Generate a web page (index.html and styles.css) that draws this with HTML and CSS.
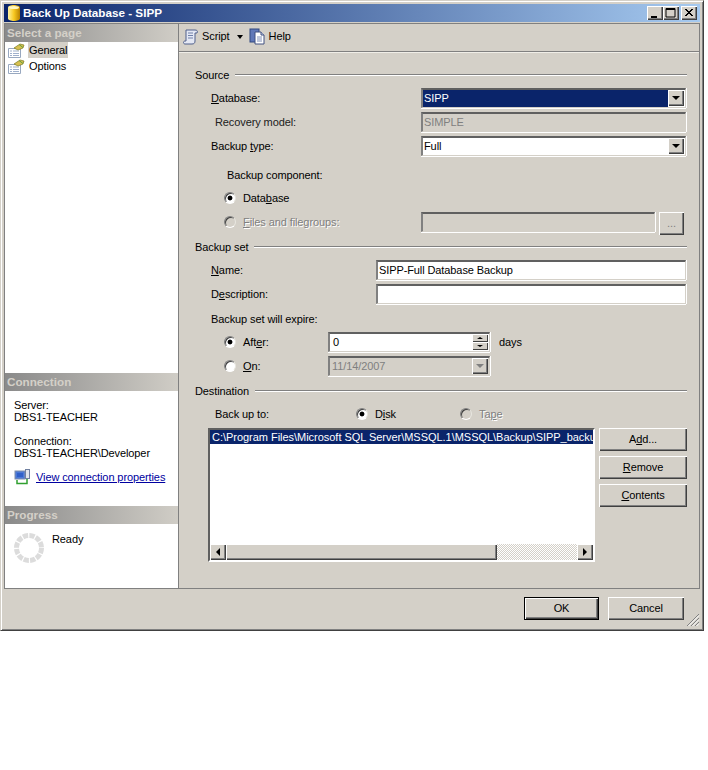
FILE: index.html
```html
<!DOCTYPE html>
<html lang="en">
<head>
<meta charset="utf-8">
<title>Back Up Database - SIPP</title>
<link rel="stylesheet" href="styles.css">
</head>
<body>
<div class="window">
  <div class="titlebar">
    <svg class="title-icon" width="12" height="16" viewBox="0 0 12 16"><defs><linearGradient id="cyl" x1="0" x2="1" y1="0" y2="0"><stop offset="0" stop-color="#fff2a0"/><stop offset=".5" stop-color="#f8c820"/><stop offset="1" stop-color="#b88000"/></linearGradient></defs><path d="M0 2.5C0 1 3 0 6 0s6 1 6 2.5v11c0 1.500-3 2.500-6 2.500s-6-1-6-2.500z" fill="url(#cyl)"/><ellipse cx="6" cy="2.500" rx="5" ry="1.500" fill="#fff6c0"/></svg>
    <span class="title-text">Back Up Database - SIPP</span>
    <div class="caption-btns">
      <span class="cap-btn"><svg width="15" height="14" viewBox="0 0 15 14"><rect x="4" y="10" width="6" height="2" fill="#000"/></svg></span>
      <span class="cap-btn"><svg width="15" height="14" viewBox="0 0 15 14"><path d="M3 2.500h9v8.500H3z M3 3.500h9" fill="none" stroke="#000"/></svg></span>
      <span class="cap-btn cap-close"><svg width="15" height="14" viewBox="0 0 15 14"><path d="M4 3l7 7M5 3l7 7M11 3l-7 7M12 3l-7 7" stroke="#000" fill="none"/></svg></span>
    </div>
  </div>

  <div class="panel">
    <aside class="sidebar">
      <section class="side-pages">
        <h2 class="side-head">Select a page</h2>
        <div class="nav-item">
          <svg class="nav-icon" width="17" height="15" viewBox="0 0 17 15"><path d="M.5 5.500h12v9H.5z" fill="#fff" stroke="#98a8c0"/><path d="M2 8h2M5 8h6M2 10.500h2M5 10.500h6M2 12.500h2M5 12.500h6" stroke="#9fb0cc"/><path d="M6 5l6-4 4 1-1 3-5 2z" fill="#d8c050" stroke="#7a7a20" stroke-width=".7"/><path d="M11 1.500l4 3" stroke="#60a040"/></svg>
          <span class="nav-label nav-active">General</span>
        </div>
        <div class="nav-item">
          <svg class="nav-icon" width="17" height="15" viewBox="0 0 17 15"><path d="M.5 5.500h12v9H.5z" fill="#fff" stroke="#98a8c0"/><path d="M2 8h2M5 8h6M2 10.500h2M5 10.500h6M2 12.500h2M5 12.500h6" stroke="#9fb0cc"/><path d="M6 5l6-4 4 1-1 3-5 2z" fill="#d8c050" stroke="#7a7a20" stroke-width=".7"/><path d="M11 1.500l4 3" stroke="#60a040"/></svg>
          <span class="nav-label">Options</span>
        </div>
      </section>
      <section class="side-conn">
        <h2 class="side-head">Connection</h2>
        <div class="conn-body">
          <p class="conn-block">Server:<br>DBS1-TEACHER</p>
          <p class="conn-block">Connection:<br>DBS1-TEACHER\Developer</p>
          <div class="conn-link">
            <svg width="17" height="16" viewBox="0 0 17 16"><rect x="1" y="2" width="10" height="8" fill="#4a78d8" stroke="#8090a8"/><rect x="3" y="4" width="6" height="4" fill="#3060c8"/><rect x="11.500" y=".5" width="4" height="9" fill="#e0e4ec" stroke="#7080a0"/><path d="M3 11v3.500h10V10" fill="none" stroke="#30a030" stroke-width="1.500"/></svg>
            <a href="#" class="link">View connection properties</a>
          </div>
        </div>
      </section>
      <section class="side-progress">
        <h2 class="side-head">Progress</h2>
        <div class="progress-body">
          <svg width="32" height="32" viewBox="0 0 32 32"><circle cx="16" cy="16" r="12.500" fill="none" stroke="#dcdcdc" stroke-width="5" stroke-dasharray="5.300 1.245"/></svg>
          <span class="ready">Ready</span>
        </div>
      </section>
    </aside>

    <main class="main">
      <div class="toolbar">
        <svg class="tool-icon" width="16" height="16" viewBox="0 0 16 16"><path d="M3 1h9c2 0 3 1 2 3h-2v8c0 2-1 3-3 3H2c-2 0-2-3 0-3h1V4z" fill="#e4e8f4" stroke="#50608c"/><path d="M5 4h5M5 6.500h5M5 9h5" stroke="#7080a8"/></svg>
        <span class="tool-text tool-script">Script</span>
        <span class="tool-caret"></span>
        <svg class="tool-icon" width="17" height="17" viewBox="0 0 17 17"><rect x="1" y="1" width="9" height="13" fill="#6078b8" stroke="#304880"/><path d="M6 4h6l3 3v9H6z" fill="#fff" stroke="#405080"/><path d="M12 4v3h3" fill="#c8d0e8" stroke="#405080"/><path d="M8 9h5M8 11h5M8 13h5" stroke="#8090b8"/></svg>
        <span class="tool-text">Help</span>
      </div>

      <div class="form">
        <div class="section"><span>Source</span><i class="rule"></i></div>
        <div class="row">
          <label class="lbl w226 in16"><u>D</u>atabase:</label>
          <div class="combo grow"><span class="combo-val selected">SIPP</span><span class="drop"><b class="arrow"></b></span></div>
        </div>
        <div class="row">
          <label class="lbl w226 in20 ro">Recovery model:</label>
          <div class="field grow field-off">SIMPLE</div>
        </div>
        <div class="row">
          <label class="lbl w226 in16">Backup <u>t</u>ype:</label>
          <div class="combo grow"><span class="combo-val">Full</span><span class="drop"><b class="arrow"></b></span></div>
        </div>
        <div class="row row-gap">
          <label class="lbl in32 solo">Backup component:</label>
        </div>
        <div class="row">
          <span class="radio on in29"></span><label class="lbl">Data<u>b</u>ase</label>
        </div>
        <div class="row">
          <span class="radio in29 radio-off"></span><label class="lbl w178 off"><u>F</u>iles and filegroups:</label>
          <div class="field w234 field-off"></div>
          <span class="btn btn-dots off-dots">...</span>
        </div>

        <div class="section"><span>Backup set</span><i class="rule"></i></div>
        <div class="row">
          <label class="lbl w181 in16"><u>N</u>ame:</label>
          <div class="field grow">SIPP-Full Database Backup</div>
        </div>
        <div class="row">
          <label class="lbl w181 in16">D<u>e</u>scription:</label>
          <div class="field grow"></div>
        </div>
        <div class="row">
          <label class="lbl in16 solo">Backup set will expire:</label>
        </div>
        <div class="row">
          <span class="radio on in29"></span><label class="lbl w85">Aft<u>e</u>r:</label>
          <div class="field w162 spin">0
            <span class="spin-btns"><span class="spin-b"><b class="arrow-up"></b></span><span class="spin-b"><b class="arrow small"></b></span></span>
          </div>
          <span class="lbl days">days</span>
        </div>
        <div class="row">
          <span class="radio in29"></span><label class="lbl w85"><u>O</u>n:</label>
          <div class="field w162 field-off date">11/14/2007<span class="drop drop-off"><b class="arrow off-arrow"></b></span></div>
        </div>

        <div class="section"><span>Destination</span><i class="rule"></i></div>
        <div class="row">
          <label class="lbl w161 in20">Back up to:</label>
          <span class="radio on"></span><label class="lbl w85">D<u>i</u>sk</label>
          <span class="radio radio-off"></span><label class="lbl off">Ta<u>p</u>e</label>
        </div>
        <div class="dest">
          <div class="list">
            <div class="list-rows"><div class="list-row">C:\Program Files\Microsoft SQL Server\MSSQL.1\MSSQL\Backup\SIPP_backup.bak</div></div>
            <div class="hscroll">
              <span class="sb-btn"><b class="arrow-left"></b></span>
              <span class="sb-thumb"></span>
              <span class="sb-track"></span>
              <span class="sb-btn"><b class="arrow-right"></b></span>
            </div>
          </div>
          <div class="dest-btns">
            <span class="btn">A<u>d</u>d...</span>
            <span class="btn"><u>R</u>emove</span>
            <span class="btn"><u>C</u>ontents</span>
          </div>
        </div>
      </div>
    </main>
  </div>

  <div class="footer">
    <span class="btn btn-default">OK</span>
    <span class="btn btn-cancel">Cancel</span>
    <svg class="grip" width="14" height="14" viewBox="0 0 14 14"><path d="M13 1L1 13M13 5L5 13M13 9L9 13" stroke="#808080" fill="none"/><path d="M13 2.500L2.500 13M13 6.500L6.500 13M13 10.500L10.500 13" stroke="#fff" fill="none"/></svg>
  </div>
</div>
</body>
</html>
```
FILE: styles.css
```css
* { box-sizing: border-box; }
html, body { margin: 0; padding: 0; background: #fff; }
body { font: 11px/13px "Liberation Sans", Arial, sans-serif; letter-spacing: -0.1px; color: #000; }
h2, p { margin: 0; }

.window {
  width: 704px; height: 631px; padding: 3px;
  background: #d4d0c8;
  border: 1px solid; border-color: #d4d0c8 #404040 #404040 #d4d0c8;
  box-shadow: inset 1px 1px #fff, inset -1px -1px #808080;
}

.titlebar {
  height: 18px; display: flex; align-items: center; padding-left: 4px;
  background: linear-gradient(90deg, #0a246a, #a6caf0);
  color: #fff; font-weight: bold; font-size: 11.7px; letter-spacing: 0;
}
.title-icon { flex: none; }
.title-text { margin: 0 0 2px 3px; }
.caption-btns { margin-left: auto; display: flex; margin-right: 3px; }
.cap-btn {
  width: 16px; height: 14px; background: #d4d0c8; display: block; overflow: hidden;
  box-shadow: inset 1px 1px #fff, inset -1px -1px #404040, inset -2px -2px #808080;
}
.cap-close { margin-left: 2px; }

.panel {
  margin-top: 1px; height: 566px; display: flex;
  border: 1px solid #808080;
}

.sidebar {
  width: 174px; flex: none; background: #fff; border-right: 1px solid #808080;
  display: flex; flex-direction: column;
}
.side-head {
  height: 18px; padding-left: 2px;
  font-size: 11.7px; line-height: 18px; font-weight: bold; color: #d4d0c8; letter-spacing: 0;
  background: linear-gradient(90deg, #8a8a8a, #d0cdc6);
}
.side-pages { height: 349px; }
.side-conn { height: 133px; }
.side-progress { height: 82px; }
.nav-item { display: flex; align-items: center; height: 16px; padding-left: 3px; }
.nav-icon { flex: none; }
.nav-label { margin-left: 3px; padding: 0 1px; line-height: 16px; }
.nav-active { background: #d4d0c8; }

.conn-body { padding: 8px 0 0 9px; }
.conn-block { line-height: 12px; margin-bottom: 12px; }
.conn-link { display: flex; align-items: center; margin-top: -2px; }
.link { color: #0000a0; margin-left: 5px; text-decoration: underline; }
.progress-body { display: flex; padding: 8px 0 0 8px; }
.ready { margin-left: 7px; margin-top: 1px; }

.main { flex: 1; min-width: 0; display: flex; flex-direction: column; }
.toolbar {
  height: 28px; flex: none; display: flex; align-items: center; padding: 0 0 2px 4px;
  border-bottom: 1px solid #808080; box-shadow: 0 1px #f0eee8;
}
.tool-text { margin-left: 3px; }
.tool-caret {
  width: 0; height: 0; margin: 0 6px 0 7px;
  border: 3px solid transparent; border-top: 4px solid #000; border-bottom: 0;
}
.form { padding: 11px 12px 0 16px; }

.section { display: flex; align-items: center; height: 24px; }
.rule { flex: 1; height: 2px; margin-left: 6px; border-top: 1px solid #808080; border-bottom: 1px solid #fff; }

.row { display: flex; align-items: center; height: 24px; }
.row > * { margin-bottom: 2px; }
.row > .solo { margin-bottom: 0; }
.row-gap { margin-top: 4px; }
.lbl { flex: none; display: block; }
.grow { flex: 1; min-width: 0; margin-right: 1px; }
.w226 { width: 226px; } .w181 { width: 181px; } .w178 { width: 178px; }
.w161 { width: 161px; } .w85 { width: 85px; }
.w234 { width: 234px; flex: none; } .w162 { width: 162px; flex: none; }
.in16 { padding-left: 16px; } .in20 { padding-left: 20px; } .in32 { padding-left: 32px; }
.in29 { margin-left: 29px; }
.ro { color: #202020; }
.off { color: #808080; text-shadow: 1px 1px #fff; }
.days { margin-left: 9px; }

.radio {
  flex: none; width: 12px; height: 12px; margin-right: 7px; border-radius: 50%;
  background: #fff; border: 1px solid; border-color: #808080 #e8e6e0 #fff #808080;
  box-shadow: inset 1px 1px #404040;
}
.radio.on { background: radial-gradient(circle at 50% 50%, #000 0, #000 2px, #fff 2.8px); }
.radio-off { background: #d4d0c8; }

.field, .combo {
  height: 20px; line-height: 17px; padding-left: 3px; background: #fff; position: relative;
  border-top: 2px solid; border-left: 2px solid; border-bottom: 1px solid #fff; border-right: 1px solid #fff;
  border-color: #606060 #d4d0c8 #d4d0c8 #808080;
  box-shadow: 0 1px #fff, 1px 0 #fff;
}
.field { padding-left: 1px; }
.field-off { background: #d4d0c8; color: #808080; }
.combo { display: flex; padding-left: 0; }
.combo-val { flex: 1; padding-left: 1px; }
.selected { background: #0a246a; color: #fff; }
.drop {
  width: 16px; height: 16px; margin: 0 1px 0 0; flex: none; background: #d4d0c8; display: flex; align-items: center; justify-content: center;
  box-shadow: inset 1px 1px #fff, inset -1px -1px #404040, inset -2px -2px #808080;
}
.arrow { width: 0; height: 0; border: 4px solid transparent; border-top: 4px solid #000; border-bottom: 0; }
.arrow.small { border-width: 2px 3px 0; border-top-color: #000; }
.arrow-up { width: 0; height: 0; border: 3px solid transparent; border-top: 0; border-bottom: 2px solid #000; }
.off-arrow { border-top-color: #808080; }
.date { display: flex; justify-content: space-between; padding-left: 2px; }

.spin { padding-left: 3px; }
.spin-btns { position: absolute; right: 1px; top: 0; display: flex; flex-direction: column; }
.spin-b {
  width: 16px; height: 8px; background: #d4d0c8; display: flex; align-items: center; justify-content: center;
  box-shadow: inset 1px 1px #fff, inset -1px -1px #404040;
}

.btn {
  display: flex; align-items: center; justify-content: center; flex: none;
  height: 23px; background: #d4d0c8;
  box-shadow: inset 1px 1px #fff, inset -1px -1px #404040, inset -2px -2px #808080;
}
.row > .btn-dots { width: 25px; height: 23px; margin: 1px 0 0 4px; }
.off-dots { color: #808080; }
.btn-default { width: 75px; height: 23px; border: 1px solid #000; }
.btn-cancel { width: 76px; height: 23px; }

.dest { display: flex; padding: 1px 0 0 13px; }
.list {
  width: 387px; height: 134px; flex: none; background: #fff; display: flex; flex-direction: column;
  border: 2px solid; border-color: #606060 #fff #fff #606060;
}
.list-rows { flex: 1; overflow: hidden; }
.list-row { height: 14px; line-height: 14px; padding-left: 2px; background: #0a246a; color: #fff; white-space: nowrap; overflow: hidden; letter-spacing: -0.03px; }
.hscroll { height: 16px; display: flex; background: repeating-conic-gradient(#d4d0c8 0 25%, #fff 0 50%) 0 0 / 2px 2px; }
.sb-btn {
  width: 16px; height: 16px; flex: none; background: #d4d0c8; display: flex; align-items: center; justify-content: center;
  box-shadow: inset 1px 1px #fff, inset -1px -1px #404040, inset -2px -2px #808080;
}
.sb-thumb {
  width: 271px; height: 16px; flex: none; background: #d4d0c8;
  box-shadow: inset 1px 1px #fff, inset -1px -1px #404040, inset -2px -2px #808080;
}
.sb-track { flex: 1; }
.arrow-left { width: 0; height: 0; border: 4px solid transparent; border-right: 4px solid #000; border-left: 0; }
.arrow-right { width: 0; height: 0; border: 4px solid transparent; border-left: 4px solid #000; border-right: 0; }
.dest-btns { margin-left: 4px; flex: 1; display: flex; flex-direction: column; gap: 5px; }

.footer { position: relative; height: 38px; padding: 8px 16px 0 0; display: flex; justify-content: flex-end; gap: 9px; }
.grip { position: absolute; right: 0; bottom: 0; }
```
